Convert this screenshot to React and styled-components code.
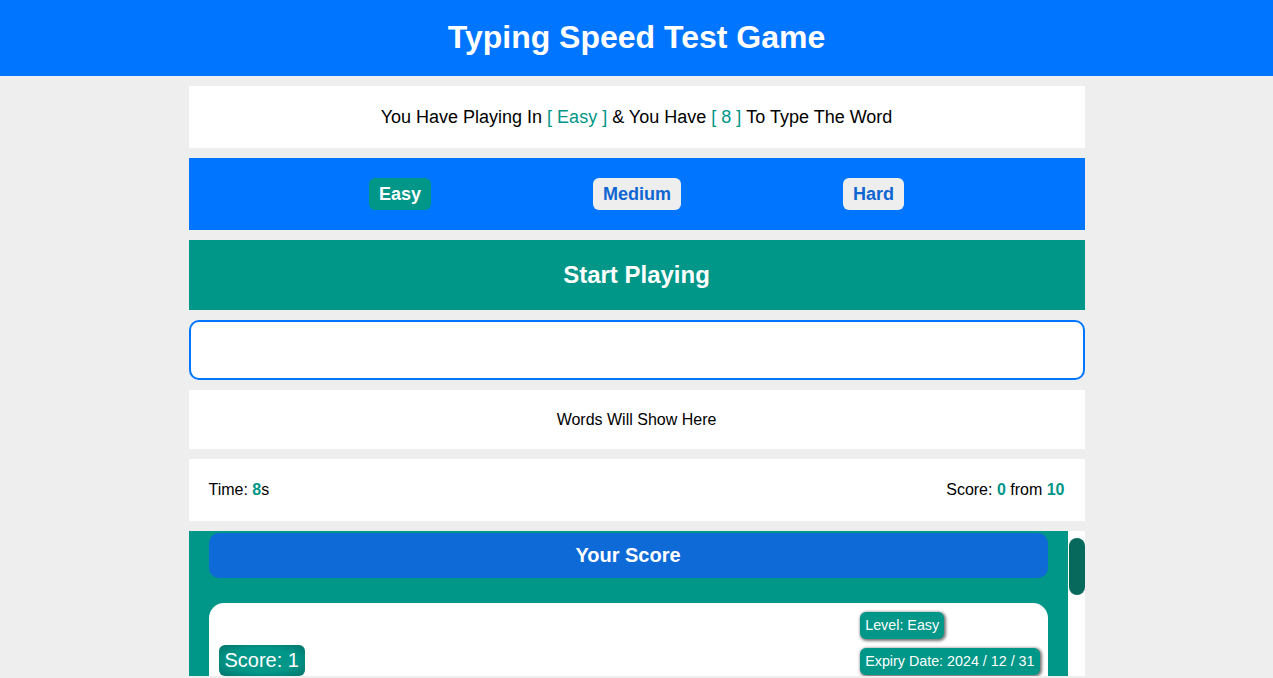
import React from "react";
import styled, { createGlobalStyle } from "styled-components";

const GlobalStyle = createGlobalStyle`
  * {
    box-sizing: border-box;
  }
  body {
    margin: 0;
    background-color: #eeeeee;
    font-family: "Liberation Sans", Arial, sans-serif;
  }
`;

const Header = styled.h1`
  margin: 0;
  height: 76px;
  display: flex;
  align-items: center;
  justify-content: center;
  background-color: #0075ff;
  color: white;
  font-size: 32px;
  font-weight: bold;
  padding-bottom: 2px;
`;

const Game = styled.div`
  width: 896px;
  margin: 10px auto 0;
  display: flex;
  flex-direction: column;
  gap: 10px;
`;

const Message = styled.div`
  height: 62px;
  background-color: white;
  display: flex;
  align-items: center;
  justify-content: center;
  font-size: 18px;
  color: black;
`;

const Hl = styled.span`
  color: #009688;
`;

const Levels = styled.div`
  height: 72px;
  background-color: #0075ff;
  display: flex;
  align-items: center;
  justify-content: center;
  gap: 162px;
`;

const LevelBtn = styled.button`
  border: none;
  border-radius: 6px;
  height: 32px;
  padding: 0 10px;
  font-family: inherit;
  font-size: 18px;
  font-weight: bold;
  cursor: pointer;
  background-color: ${(p) => (p.$active ? "#009688" : "#eeeeee")};
  color: ${(p) => (p.$active ? "white" : "#0e66d3")};
`;

const Start = styled.div`
  height: 70px;
  background-color: #009688;
  color: white;
  font-size: 24px;
  font-weight: bold;
  display: flex;
  align-items: center;
  justify-content: center;
`;

const Input = styled.input`
  height: 60px;
  width: 100%;
  border: 2px solid #0075ff;
  border-radius: 10px;
  outline: none;
  font-size: 20px;
  padding: 0 15px;
  background: white;
`;

const Words = styled.div`
  height: 59px;
  background-color: white;
  display: flex;
  align-items: center;
  justify-content: center;
  font-size: 16px;
  font-weight: 300;
  color: black;
`;

const Stats = styled.div`
  height: 62px;
  background-color: white;
  display: flex;
  align-items: center;
  justify-content: space-between;
  padding: 0 20px;
  font-size: 16px;
  color: black;
`;

const Num = styled.span`
  color: #009688;
  font-weight: bold;
`;

const ScoreArea = styled.div`
  height: 145px;
  background-color: #009688;
  display: flex;
  overflow: hidden;
`;

const ScoreContent = styled.div`
  flex: 1;
  padding: 2px 20px 20px;
`;

const Track = styled.div`
  width: 17px;
  flex-shrink: 0;
  background-color: white;
  padding: 7px 0 0 1px;
`;

const Thumb = styled.div`
  width: 16px;
  height: 57px;
  border-radius: 8px;
  background-color: #07695c;
`;

const ScoreTitle = styled.div`
  height: 45px;
  border-radius: 10px;
  background-color: #0e6ad6;
  color: white;
  font-size: 20px;
  font-weight: bold;
  display: flex;
  align-items: center;
  justify-content: center;
`;

const Card = styled.div`
  margin-top: 25px;
  background-color: white;
  border-radius: 15px;
  padding: 9px 8px 10px 10px;
  display: flex;
  justify-content: space-between;
  align-items: flex-start;
  min-height: 180px;
`;

const Column = styled.div`
  display: flex;
  flex-direction: column;
  align-items: flex-start;
  gap: 9px;
`;

const ScoreBadge = styled.div`
  margin-top: 33px;
  padding: 4px 6px;
  border-radius: 6px;
  background: radial-gradient(ellipse at center, #009688 55%, #04736a 100%);
  color: white;
  font-size: 20px;
`;

const Tag = styled.div`
  padding: 5px 5px 6px;
  border-radius: 6px;
  background-color: #009688;
  color: white;
  font-size: 14.3px;
  font-weight: 300;
  box-shadow: 1px 1px 3px 1px #777;
`;

export default function App() {
  return (
    <>
      <GlobalStyle />
      <Header>Typing Speed Test Game</Header>
      <Game>
        <Message>
          You Have Playing In&nbsp;<Hl>[ Easy ]</Hl>&nbsp;&amp; You Have&nbsp;
          <Hl>[ 8 ]</Hl>&nbsp;To Type The Word
        </Message>
        <Levels>
          <LevelBtn $active>Easy</LevelBtn>
          <LevelBtn>Medium</LevelBtn>
          <LevelBtn>Hard</LevelBtn>
        </Levels>
        <Start>Start Playing</Start>
        <Input type="text" />
        <Words>Words Will Show Here</Words>
        <Stats>
          <span>
            Time: <Num>8</Num>s
          </span>
          <span>
            Score: <Num>0</Num> from <Num>10</Num>
          </span>
        </Stats>
        <ScoreArea>
          <ScoreContent>
            <ScoreTitle>Your Score</ScoreTitle>
            <Card>
              <ScoreBadge>Score: 1</ScoreBadge>
              <Column>
                <Tag>Level: Easy</Tag>
                <Tag>Expiry Date: 2024 / 12 / 31</Tag>
              </Column>
            </Card>
          </ScoreContent>
          <Track>
            <Thumb />
          </Track>
        </ScoreArea>
      </Game>
    </>
  );
}
